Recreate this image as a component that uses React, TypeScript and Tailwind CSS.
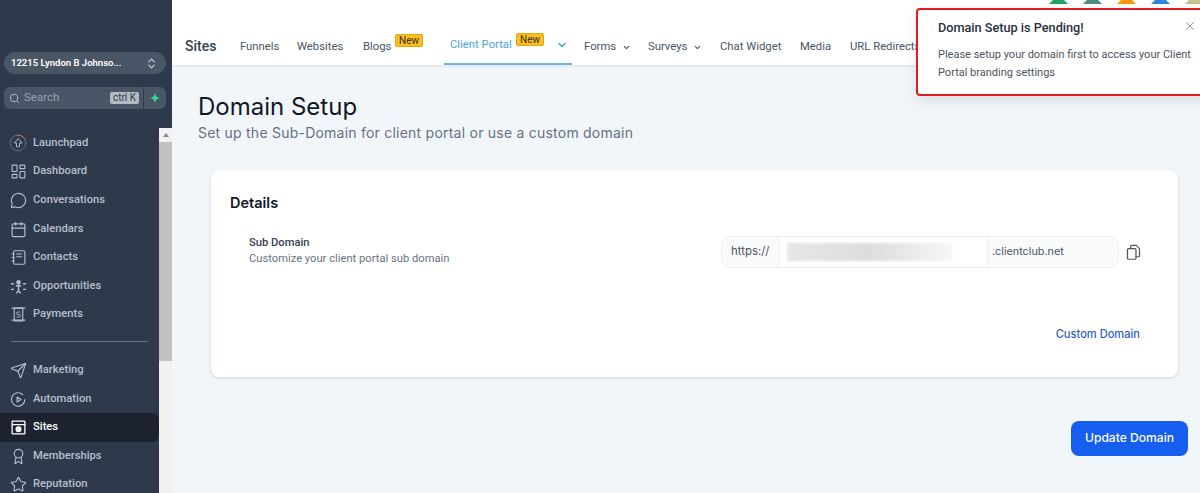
import { Award, Calendar, ChevronDown, ChevronsUpDown, MessageCircle, Search, Send, Star, X } from 'lucide-react'
import type { ReactNode } from 'react'

const iconProps = { width: 17, height: 17, viewBox: '0 0 24 24', fill: 'none', stroke: 'currentColor', strokeWidth: 1.6, strokeLinecap: 'round' as const, strokeLinejoin: 'round' as const }

function LaunchpadIcon() {
  return (
    <svg {...iconProps} width={18} height={18} strokeWidth={1.2}>
      <circle cx="12" cy="12" r="10.5" stroke="#64748b" />
      <path d="M12 1.5a10.5 10.5 0 0 1 9 5" stroke="#f97316" />
      <path d="M12 6.5 7 12h3v5h4v-5h3z" />
    </svg>
  )
}

function DashboardIcon() {
  return (
    <svg {...iconProps}>
      <rect x="3" y="3" width="7" height="9" rx="1" />
      <rect x="14" y="3" width="7" height="5" rx="1" />
      <rect x="14" y="12" width="7" height="9" rx="1" />
      <rect x="3" y="16" width="7" height="5" rx="1" />
    </svg>
  )
}

function ContactsIcon() {
  return (
    <svg {...iconProps}>
      <rect x="5" y="2.5" width="16" height="19" rx="2" />
      <path d="M9.5 7h7M9.5 11h7M3 7h3M3 12h3M3 17h3" />
    </svg>
  )
}

function OpportunitiesIcon() {
  return (
    <svg {...iconProps} strokeWidth={2}>
      <circle cx="12" cy="6" r="2.2" fill="currentColor" />
      <path d="M12 9v9M9 11h6M9.5 21l2.5-3 2.500 3" />
      <path d="M2 8h3M2 16h3M19 8h3M19 16h3" />
    </svg>
  )
}

function PaymentsIcon() {
  return (
    <svg {...iconProps}>
      <path d="M3 3h18M3 20h18" />
      <rect x="6" y="3" width="12" height="18" />
      <path d="M14 8.500h-3a1.500 1.500 0 0 0 0 3.500h2a1.500 1.500 0 0 1 0 3.500h-3" strokeWidth={1.3} />
    </svg>
  )
}

function AutomationIcon() {
  return (
    <svg {...iconProps}>
      <path d="M21 12a9.500 9.500 0 1 1-3-7" />
      <path d="M10 8.500v7l5.500-3.500z" />
    </svg>
  )
}

function SitesIcon() {
  return (
    <svg {...iconProps} strokeWidth={1.8}>
      <rect x="3" y="3" width="18" height="18" rx="1" />
      <path d="M3 8h18" />
      <circle cx="12" cy="14.500" r="3.400" fill="currentColor" />
    </svg>
  )
}

function SparkIcon() {
  return (
    <svg width="12" height="12" viewBox="0 0 24 24" fill="#34d399">
      <path d="M12 1c1 7 4 10 11 11-7 1-10 4-11 11-1-7-4-10-11-11 7-1 10-4 11-11z" />
    </svg>
  )
}

function CopyIcon() {
  return (
    <svg {...iconProps} width={17} height={17} strokeWidth={1.7} className="text-[#4b5563]">
      <rect x="3.500" y="6.500" width="12" height="15" rx="1.500" />
      <path d="M8 6.500V3.500A1.500 1.500 0 0 1 9.500 2H16l4.500 4.500v10a1.500 1.500 0 0 1-1.500 1.500h-3.500" />
    </svg>
  )
}

type NavItem = { label: string; icon: ReactNode; active?: boolean }

const primaryNav: NavItem[] = [
  { label: 'Launchpad', icon: <LaunchpadIcon /> },
  { label: 'Dashboard', icon: <DashboardIcon /> },
  { label: 'Conversations', icon: <MessageCircle size={17} strokeWidth={1.6} /> },
  { label: 'Calendars', icon: <Calendar size={17} strokeWidth={1.6} /> },
  { label: 'Contacts', icon: <ContactsIcon /> },
  { label: 'Opportunities', icon: <OpportunitiesIcon /> },
  { label: 'Payments', icon: <PaymentsIcon /> },
]

const secondaryNav: NavItem[] = [
  { label: 'Marketing', icon: <Send size={17} strokeWidth={1.6} /> },
  { label: 'Automation', icon: <AutomationIcon /> },
  { label: 'Sites', icon: <SitesIcon />, active: true },
  { label: 'Memberships', icon: <Award size={17} strokeWidth={1.6} /> },
  { label: 'Reputation', icon: <Star size={17} strokeWidth={1.6} /> },
]

function SideRow({ item }: { item: NavItem }) {
  return (
    <div
      className={
        item.active
          ? 'flex h-[28.6px] items-center gap-[6px] rounded-r-md bg-[#1c2230] pl-[9px] text-[11.2px] font-medium text-white'
          : 'flex h-[28.6px] items-center gap-[6px] pl-[9px] text-[11.2px] font-medium text-[#b6bfcb]'
      }
    >
      <span className="flex w-[18px] justify-center">{item.icon}</span>
      {item.label}
    </div>
  )
}

function Sidebar() {
  return (
    <aside className="flex h-[493px] w-[172px] shrink-0 flex-col bg-[#2e3a4c] font-['Roboto',sans-serif]">
      <div className="ml-[4px] mt-[52px] flex h-[22px] w-[162px] items-center justify-between rounded-full bg-[#4a5566] pl-[7px] pr-[8px] text-[9.500px] font-semibold text-white">
        12215 Lyndon B Johnso...
        <ChevronsUpDown size={13} className="text-[#cbd2db]" />
      </div>
      <div className="ml-[4px] mt-[13px] flex h-[22px] w-[162px] gap-px">
        <div className="flex w-[139px] items-center rounded-l-md bg-[#4a5566] pl-[5px] pr-[4px] text-[11.500px] text-[#98a2b1]">
          <Search size={11} className="text-[#b6bfcb]" />
          <span className="ml-[4px] flex-1">Search</span>
          <span className="rounded-[2px] bg-[#b4bac3] px-[3px] text-[10px] leading-[12px] text-[#2e3a4c]">ctrl K</span>
        </div>
        <div className="flex flex-1 items-center justify-center rounded-r-md bg-[#4a5566]">
          <SparkIcon />
        </div>
      </div>
      <div className="mt-[19px] flex min-h-0 flex-1">
        <nav className="w-[159px] shrink-0 overflow-hidden pt-[1px]">
          <div className="flex flex-col">
            {primaryNav.map((item) => (
              <SideRow key={item.label} item={item} />
            ))}
            <div className="mx-[11px] mb-[14px] mt-[12px] h-px bg-[#64708a]" />
            {secondaryNav.map((item) => (
              <SideRow key={item.label} item={item} />
            ))}
          </div>
        </nav>
        <div className="flex flex-1 flex-col bg-[#f1f1f1]">
          <div className="flex h-[14px] items-center justify-center">
            <span className="h-0 w-0 border-x-[3px] border-b-[4px] border-x-transparent border-b-[#8a8a8a]" />
          </div>
          <div className="h-[219px] bg-[#c1c1c1]" />
        </div>
      </div>
    </aside>
  )
}

function Badge({ gap }: { gap: string }) {
  return <span className={`mb-[12px] w-[28px] rounded-[2px] border border-[#e5a50a] bg-[#fbbf24] text-center text-[10px] leading-[11px] text-[#3b3210] ${gap}`}>New</span>
}

function Header() {
  return (
    <header className="flex h-[66px] shrink-0 items-end border-b border-[#e5e7eb] bg-white pl-[13px] font-['Roboto',sans-serif] text-[11.300px] text-[#4b5563] shadow-[0_1px_2px_rgba(0,0,0,0.05)]">
      <div className="flex h-[65px] items-center pt-[27px] whitespace-nowrap">
        <span className="w-[32px] text-[14px] font-medium text-[#374151]">Sites</span>
        <span className="ml-[23px] w-[39px] translate-y-px">Funnels</span>
        <span className="ml-[18px] w-[46px] translate-y-px">Websites</span>
        <span className="ml-[20px] flex w-[60px] items-center">
          <span className="w-[28px] translate-y-px">Blogs</span>
          <Badge gap="ml-[4px]" />
        </span>
        <span className="ml-[21px] flex h-[38px] w-[128px] items-center border-b-2 border-[#6db5df] pl-[6px] text-[#4ba3d6]">
          <span className="w-[61px]">Client Portal</span>
          <Badge gap="ml-[5px]" />
          <ChevronDown size={12} strokeWidth={3} className="ml-[12px]" />
        </span>
        <span className="ml-[12px] flex translate-y-px items-center gap-[6px]">
          <span className="w-[32px]">Forms</span>
          <ChevronDown size={9} strokeWidth={3} />
        </span>
        <span className="ml-[17px] flex translate-y-px items-center gap-[5px]">
          <span className="w-[40px]">Surveys</span>
          <ChevronDown size={9} strokeWidth={3} />
        </span>
        <span className="ml-[18px] w-[62px] translate-y-px">Chat Widget</span>
        <span className="ml-[18px] w-[32px] translate-y-px">Media</span>
        <span className="ml-[18px] translate-y-px">URL Redirects</span>
      </div>
    </header>
  )
}

function Toast() {
  return (
    <div className="absolute left-[916px] top-[8px] h-[88px] w-[300px] rounded-[4px] border-[2.500px] border-[#e01b24] bg-white pl-[20px] pt-[8px] font-['Roboto',sans-serif] shadow-[0_4px_14px_rgba(0,0,0,0.1)]">
      <div className="text-[12.700px] font-medium leading-[20px] text-[#27303f]">Domain Setup is Pending!</div>
      <p className="mt-[8px] w-[262px] text-[11px] leading-[18px] text-[#4b5563]">Please setup your domain first to access your Client Portal branding settings</p>
      <X size={14} strokeWidth={1.2} className="absolute left-[265px] top-[9px] text-[#6b7280]" />
    </div>
  )
}

function TopAvatars() {
  return (
    <div className="absolute left-[1048px] top-0 flex gap-[13px]">
      {['#22a565', '#4a8f84', '#f59e0b', '#2f86e0', '#c9c08a'].map((color) => (
        <svg key={color} width="21" height="4" viewBox="0 0 21 4">
          <path d="M1 4 5 0h11l4 4z" fill={color} />
        </svg>
      ))}
    </div>
  )
}

function DetailsCard() {
  return (
    <section className="mx-[22px] mt-[27px] h-[207px] rounded-lg bg-white pl-[19px] pr-[38px] pt-[23px] shadow-[0_1px_3px_rgba(0,0,0,0.14)]">
      <h2 className="font-['Inter',sans-serif] text-[14.500px] font-semibold leading-[20px] text-[#111827]">Details</h2>
      <div className="mt-[23px] flex items-start justify-between pl-[19px]">
        <div className="mt-[-1px] font-['Roboto',sans-serif] text-[11.200px] leading-[16px]">
          <div className="font-medium text-[#374151]">Sub Domain</div>
          <div className="text-[#6b7280]">Customize your client portal sub domain</div>
        </div>
        <div className="-mr-[2px] flex items-center">
          <div className="flex h-[32px] w-[398px] items-stretch rounded-lg border border-[#eef0f3] bg-[#f9fafb] font-['Inter',sans-serif] text-[#4b5563]">
            <span className="flex w-[57px] items-center pl-[9px] text-[11.400px]">https://</span>
            <span className="flex w-[209px] items-center border-x border-[#f1f2f4] bg-white pl-[7px]">
              <span className="h-[18px] w-[165px] bg-gradient-to-r from-[#e7e7e8] via-[#dcdddf] to-[#f6f6f6] blur-[1px]" />
            </span>
            <span className="flex flex-1 items-center pl-[4px] text-[10.800px]">.clientclub.net</span>
          </div>
          <span className="ml-[6px]">
            <CopyIcon />
          </span>
        </div>
      </div>
      <div className="mt-[58px] text-right font-['Inter',sans-serif] text-[11.100px] font-medium text-[#2b5fc7]">Custom Domain</div>
    </section>
  )
}

export default function App() {
  return (
    <div className="relative flex h-[493px] w-[1200px] overflow-hidden bg-[#f1f6fa]">
      <Sidebar />
      <main className="flex min-w-0 flex-1 flex-col">
        <Header />
        <div className="pl-[26px] pt-[27px] font-['Inter',sans-serif]">
          <h1 className="text-[24px] font-normal leading-[28px] text-[#111827]">Domain Setup</h1>
          <p className="mt-[2px] text-[14px] leading-[20px] tracking-[0.23px] text-[#667085]">Set up the Sub-Domain for client portal or use a custom domain</p>
        </div>
        <div className="pl-[17px]">
          <DetailsCard />
        </div>
        <div className="mr-[12px] mt-[44px] flex justify-end">
          <button className="h-[35px] w-[117px] rounded-lg bg-[#155eef] font-['Inter',sans-serif] text-[12.100px] font-medium text-white">Update Domain</button>
        </div>
      </main>
      <TopAvatars />
      <Toast />
    </div>
  )
}
